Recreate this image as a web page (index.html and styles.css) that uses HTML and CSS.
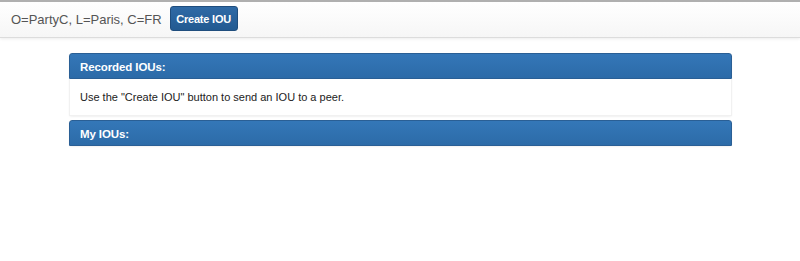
FILE: index.html
```html
<html>
<head>
  <link rel="stylesheet" href="styles.css">
</head>
<body>
  <div class="navbar">
    <span class="nome">O=PartyC, L=Paris, C=FR</span>
    <button class="botao">Create IOU</button>
  </div>

  <div class="conteudo">
    <div class="painel">
      <div class="painel-titulo">Recorded IOUs:</div>
      <div class="painel-corpo">Use the "Create IOU" button to send an IOU to a peer.</div>
    </div>
    <div class="painel">
      <div class="painel-titulo">My IOUs:</div>
    </div>
  </div>
</body>
</html>
```

FILE: styles.css
```css
* {
    box-sizing: border-box;
    margin: 0;
    padding: 0;
}

body {
    font-family: "Liberation Sans", Arial, sans-serif;
    background: #fff;
    color: #333;
}

.navbar {
    height: 38px;
    border-top: 2px solid #b0b0b0;
    border-bottom: 1px solid #dcdcdc;
    background: linear-gradient(#ffffff, #f6f6f6);
    box-shadow: 0 1px 3px rgba(0, 0, 0, 0.08);
    display: flex;
    align-items: center;
    padding-left: 11px;
}

.nome {
    font-size: 13px;
    color: #555;
}

.botao {
    margin-left: 8px;
    width: 68px;
    height: 25px;
    font-family: "Liberation Sans", Arial, sans-serif;
    font-size: 11px;
    font-weight: bold;
    letter-spacing: -0.2px;
    color: #fff;
    border: 1px solid #1f4d7d;
    border-radius: 3px;
    background: linear-gradient(#2f6aa6, #235a91);
    margin-top: -2px;
}

.conteudo {
    width: 663px;
    margin: 15px 0 0 69px;
}

.painel {
    margin-bottom: 4px;
    border-radius: 3px;
    box-shadow: 0 1px 2px rgba(0, 0, 0, 0.06);
    background: #fff;
}

.painel-titulo {
    height: 26px;
    padding: 0 10px;
    line-height: 26px;
    font-size: 11.5px;
    font-weight: bold;
    letter-spacing: -0.1px;
    color: #fff;
    border: 1px solid #2a5f95;
    border-radius: 3px 3px 0 0;
    background: linear-gradient(#3477b8, #2c6ba8);
}

.painel-corpo {
    height: 37px;
    padding: 0 10px;
    line-height: 36px;
    font-size: 11px;
    color: #222;
    border: 1px solid #f1f1f1;
    border-top: 0;
}
```
